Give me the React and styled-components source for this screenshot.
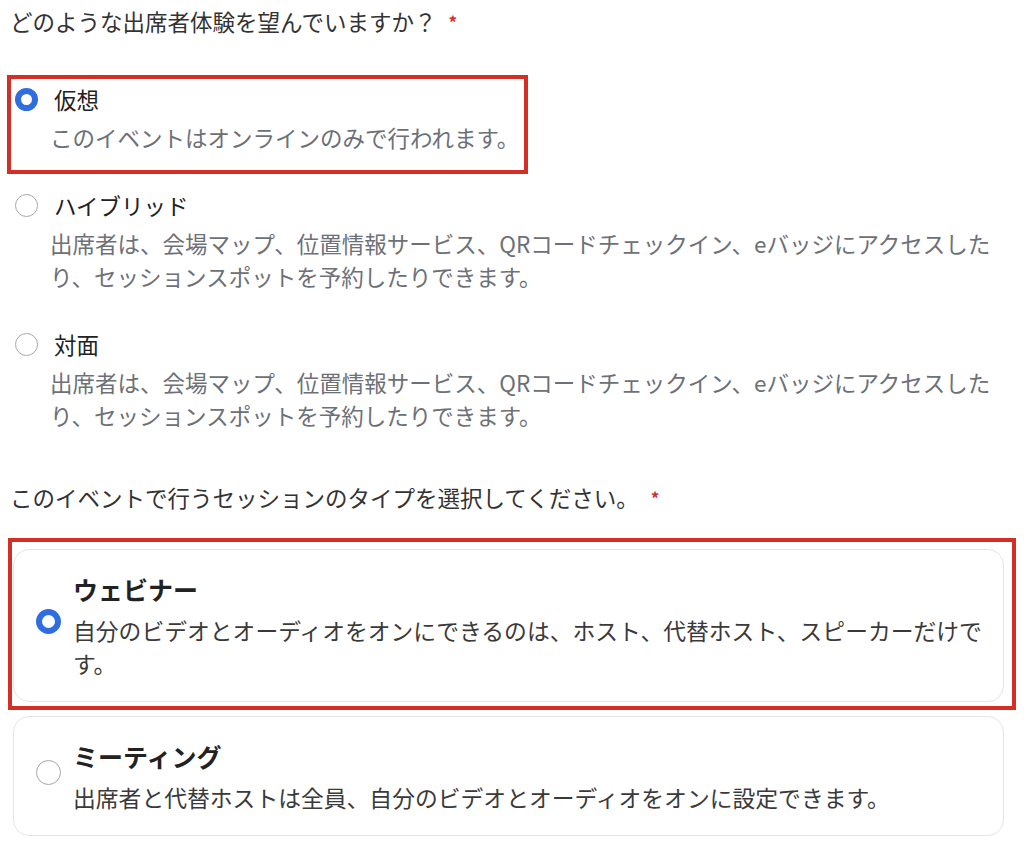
import React from 'react'
import styled, { createGlobalStyle, css } from 'styled-components'

const GlobalStyle = createGlobalStyle`
  body {
    margin: 0;
    background: #fff;
    font-family: "Noto Sans CJK JP", "Noto Sans", sans-serif;
  }
`

const Page = styled.div`
  padding: 5px 30px 20px 10px;
`

const Question = styled.div`
  font-size: 22.5px;
  line-height: 33px;
  color: #333;
  margin-top: ${props => props.mt || 0}px;
`

const Required = styled.span`
  color: #d3312b;
  font-size: 17px;
  font-weight: 700;
  margin-left: 12px;
  vertical-align: 2px;
`

// red frame drawn over the chosen answer
const marker = css`
  &::after {
    content: '';
    position: absolute;
    box-sizing: border-box;
    pointer-events: none;
    border: 4px solid #d42f26;
    ${props => props.frame}
  }
`

const OptionList = styled.div`
  display: flex;
  flex-direction: column;
  gap: 35px;
  margin-top: 45px;
`

const Option = styled.label`
  position: relative;
  display: flex;
  flex-direction: column;
  gap: 5px;
  ${props => props.frame && marker}
`

const OptionHead = styled.div`
  display: flex;
  align-items: center;
  gap: 16px;
  padding-left: 5px;
`

const Radio = styled.span`
  box-sizing: border-box;
  flex: none;
  width: ${props => props.size}px;
  height: ${props => props.size}px;
  margin-bottom: ${props => props.lift || 0}px;
  border-radius: 50%;
  background: #fff;
  border: ${props => props.checked ? '6px solid #2f6de0' : '1px solid #a3a8b0'};
`

const OptionLabel = styled.span`
  font-size: 22.5px;
  line-height: 33px;
  color: #222;
`

const OptionDesc = styled.div`
  padding-left: 40px;
  padding-right: 4px;
  font-size: 22.5px;
  line-height: 33px;
  color: #6d7077;
`

const CardList = styled.div`
  display: flex;
  flex-direction: column;
  gap: 14px;
  margin: 35px 0 0 3px;
`

const Card = styled.label`
  position: relative;
  display: flex;
  align-items: center;
  gap: 12px;
  padding: 21px 10px 21px 22px;
  border: 1px solid #e3e5e9;
  border-radius: 16px;
  ${props => props.frame && marker}
`

const CardBody = styled.div`
  display: flex;
  flex-direction: column;
  gap: 6px;
`

const CardTitle = styled.div`
  font-size: 25px;
  line-height: 37px;
  font-weight: 700;
  color: #222;
`

const CardDesc = styled.div`
  font-size: 22.8px;
  line-height: 33px;
  color: #3a3a3a;
`

const attendance = [
  { label: '仮想', desc: 'このイベントはオンラインのみで行われます。', checked: true },
  { label: 'ハイブリッド', desc: '出席者は、会場マップ、位置情報サービス、QRコードチェックイン、eバッジにアクセスしたり、セッションスポットを予約したりできます。' },
  { label: '対面', desc: '出席者は、会場マップ、位置情報サービス、QRコードチェックイン、eバッジにアクセスしたり、セッションスポットを予約したりできます。' },
]

const sessions = [
  { title: 'ウェビナー', desc: '自分のビデオとオーディオをオンにできるのは、ホスト、代替ホスト、スピーカーだけです。', checked: true },
  { title: 'ミーティング', desc: '出席者と代替ホストは全員、自分のビデオとオーディオをオンに設定できます。' },
]

const attendanceFrame = 'left: -3px; top: -8px; width: 521px; bottom: -20px;'
const sessionFrame = 'left: -6px; top: -12px; right: -13px; bottom: -9px;'

export default function App () {
  return (
    <Page>
      <GlobalStyle />
      <Question>どのような出席者体験を望んでいますか？<Required>*</Required></Question>
      <OptionList>
        {attendance.map(o => (
          <Option key={o.label} frame={o.checked ? attendanceFrame : null}>
            <OptionHead>
              <Radio size={23} checked={o.checked} />
              <OptionLabel>{o.label}</OptionLabel>
            </OptionHead>
            <OptionDesc>{o.desc}</OptionDesc>
          </Option>
        ))}
      </OptionList>

      <Question mt={49}>このイベントで行うセッションのタイプを選択してください。<Required>*</Required></Question>
      <CardList>
        {sessions.map(s => (
          <Card key={s.title} frame={s.checked ? sessionFrame : null}>
            <Radio size={25} lift={8} checked={s.checked} />
            <CardBody>
              <CardTitle>{s.title}</CardTitle>
              <CardDesc>{s.desc}</CardDesc>
            </CardBody>
          </Card>
        ))}
      </CardList>
    </Page>
  )
}
